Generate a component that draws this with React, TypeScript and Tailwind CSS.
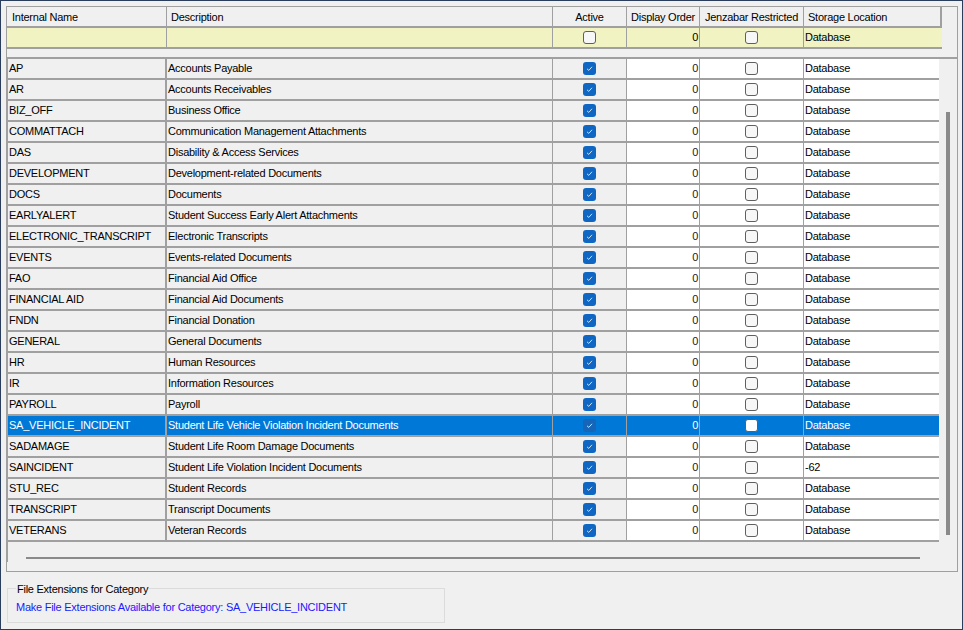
import React from "react";

const rows: [string, string, string?][] = [
  ["AP", "Accounts Payable"],
  ["AR", "Accounts Receivables"],
  ["BIZ_OFF", "Business Office"],
  ["COMMATTACH", "Communication Management Attachments"],
  ["DAS", "Disability & Access Services"],
  ["DEVELOPMENT", "Development-related Documents"],
  ["DOCS", "Documents"],
  ["EARLYALERT", "Student Success Early Alert Attachments"],
  ["ELECTRONIC_TRANSCRIPT", "Electronic Transcripts"],
  ["EVENTS", "Events-related Documents"],
  ["FAO", "Financial Aid Office"],
  ["FINANCIAL AID", "Financial Aid Documents"],
  ["FNDN", "Financial Donation"],
  ["GENERAL", "General Documents"],
  ["HR", "Human Resources"],
  ["IR", "Information Resources"],
  ["PAYROLL", "Payroll"],
  ["SA_VEHICLE_INCIDENT", "Student Life Vehicle Violation Incident Documents"],
  ["SADAMAGE", "Student Life Room Damage Documents"],
  ["SAINCIDENT", "Student Life Violation Incident Documents", "-62"],
  ["STU_REC", "Student Records"],
  ["TRANSCRIPT", "Transcript Documents"],
  ["VETERANS", "Veteran Records"],
];

const Box = ({ checked, sel }: { checked?: boolean; sel?: boolean }) =>
  checked ? (
    <div className={`w-[13px] h-[13px] rounded-[3px] flex items-center justify-center ${sel ? "bg-[#1565b8]" : "bg-[#0f67c3]"}`}>
      <svg width="9" height="9" viewBox="0 0 9 9"><path d="M2 4.8 L3.8 6.4 L7 2.8" stroke="#cfe0f5" strokeWidth="1" fill="none" /></svg>
    </div>
  ) : (
    <div className={`w-[13px] h-[13px] rounded-[3px] border border-[#5f5f5f] ${sel ? "bg-white" : "bg-[#f7f7f7]"}`} />
  );

export default function App() {
  return (
    <div className="w-[963px] h-[630px] bg-[#f0f0f0] border border-[#2b3d5c] relative text-[11px] tracking-[-0.25px] text-black overflow-hidden" style={{ fontFamily: '"Liberation Sans", Arial, sans-serif' }}>
      <div className="absolute left-[5px] top-[5px] w-[952px] h-[566px] border border-[#a0a0a0] bg-[#f0f0f0]">
        <div className="flex h-[21px] border-b-2 border-[#a0a0a0] w-[935px]">
          <div className="w-[160px] border-r border-[#a0a0a0] pl-[5px] leading-[20px]">Internal Name</div>
          <div className="w-[386px] border-r border-[#a0a0a0] pl-[4px] leading-[20px]">Description</div>
          <div className="w-[74px] border-r border-[#a0a0a0] text-center leading-[20px]">Active</div>
          <div className="w-[73px] border-r border-[#a0a0a0] text-center leading-[20px]">Display Order</div>
          <div className="w-[104px] border-r border-[#a0a0a0] text-center leading-[20px]">Jenzabar Restricted</div>
          <div className="w-[138px] border-r-2 border-[#a0a0a0] pl-[4px] leading-[20px]">Storage Location</div>
        </div>
        <div className="flex h-[21px] bg-[#f1f4c2] w-[935px] border-b-2 border-[#a0a0a0]">
          <div className="w-[160px] border-r border-[#a0a0a0]" />
          <div className="w-[386px] border-r border-[#a0a0a0]" />
          <div className="w-[74px] border-r border-[#a0a0a0] flex items-center justify-center"><Box /></div>
          <div className="w-[73px] border-r border-[#a0a0a0] text-right pr-[1px] leading-[19px]">0</div>
          <div className="w-[104px] border-r border-[#a0a0a0] flex items-center justify-center"><Box /></div>
          <div className="w-[138px] pl-[1px] leading-[19px]">Database</div>
        </div>
        <div className="h-[8px]" />
        <div className="border-t-2 border-l border-[#a0a0a0] relative h-[505px]">
          {rows.map(([n, d, s]) => {
            const sel = n === "SA_VEHICLE_INCIDENT";
            const base = sel ? "bg-[#0078d7] text-white" : "";
            return (
              <div key={n} className={`flex h-[21px] w-[931px] border-b-2 border-[#a0a0a0] ${base}`}>
                <div className={`w-[159px] border-r-2 border-[#a0a0a0] pl-[1px] leading-[19px] ${sel ? "" : "bg-[#f0f0f0]"}`}>{n}</div>
                <div className={`w-[386px] border-r border-[#a0a0a0] pl-[1px] leading-[19px] ${sel ? "" : "bg-[#f0f0f0]"}`}>{d}</div>
                <div className={`w-[74px] border-r border-[#a0a0a0] flex items-center justify-center ${sel ? "" : "bg-[#f0f0f0]"}`}><Box checked sel={sel} /></div>
                <div className={`w-[73px] border-r border-[#a0a0a0] text-right pr-[1px] leading-[19px] ${sel ? "" : "bg-white text-[#1a1a1a]"}`}>0</div>
                <div className={`w-[104px] border-r border-[#a0a0a0] flex items-center justify-center ${sel ? "" : "bg-white"}`}><Box sel={sel} /></div>
                <div className={`w-[135px] pl-[1px] leading-[19px] ${sel ? "" : "bg-white"}`}>{s ?? "Database"}</div>
              </div>
            );
          })}
          <div className="absolute left-[938px] top-[53px] w-[4px] h-[423px] bg-[#8a8a8a]" />
          <div className="absolute left-[18px] top-[498px] w-[894px] h-[2px] bg-[#8a8a8a]" />
        </div>
      </div>
      <div className="absolute left-[6px] top-[587px] w-[438px] h-[35px] border border-[#dcdcdc]">
        <div className="absolute left-[8px] top-[-7px] bg-[#f0f0f0] px-[1px] leading-[14px]">File Extensions for Category</div>
        <div className="absolute left-[8px] top-[11px] text-[#1a1aff] leading-[14px]">Make File Extensions Available for Category: SA_VEHICLE_INCIDENT</div>
      </div>
    </div>
  );
}
